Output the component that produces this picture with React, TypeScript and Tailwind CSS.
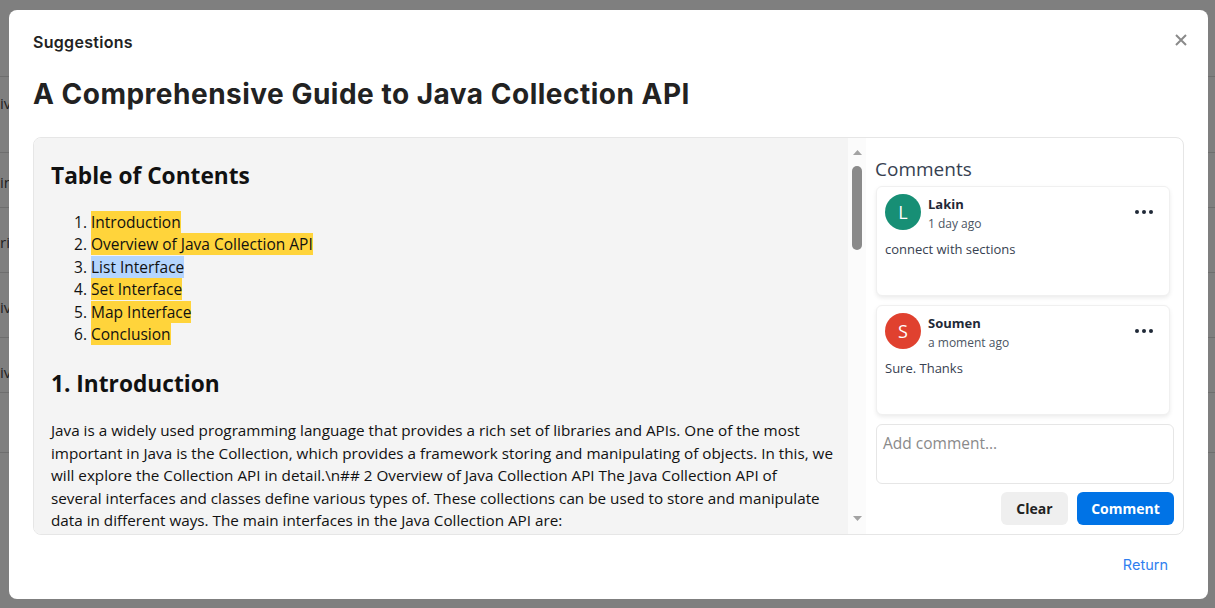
import React from "react";

const bgRows = [
  { h: "h-[77px]", pt: "pt-[0px]", t: "" },
  { h: "h-[76px]", pt: "pt-[16px]", t: "iv" },
  { h: "h-[55px]", pt: "pt-[19px]", t: "in" },
  { h: "h-[65px]", pt: "pt-[24px]", t: "rit" },
  { h: "h-[65px]", pt: "pt-[24px]", t: "iv" },
  { h: "h-[55px]", pt: "pt-[24px]", t: "iv" },
  { h: "h-[60px]", pt: "pt-[0px]", t: "" },
];

function Dots() {
  return (
    <svg width="18" height="4" viewBox="0 0 18 4" className="fill-[#1f2937]">
      <circle cx="2" cy="2" r="2" />
      <circle cx="9" cy="2" r="2" />
      <circle cx="16" cy="2" r="2" />
    </svg>
  );
}

function Comment({
  letter,
  color,
  name,
  time,
  text,
}: {
  letter: string;
  color: string;
  name: string;
  time: string;
  text: string;
}) {
  return (
    <div className="h-[110px] rounded-md border border-[#f0f0f0] bg-white px-[8px] pt-[7px] shadow-[0_2px_4px_rgba(0,0,0,0.08)]">
      <div className="flex items-start">
        <div
          className={`flex h-9 w-9 shrink-0 items-center justify-center rounded-full text-[18px] text-white ${color}`}
        >
          {letter}
        </div>
        <div className="ml-[7px] flex flex-1 flex-col pt-px">
          <span className="text-[13px] font-bold leading-[18px] text-[#1f2937]">{name}</span>
          <span className="pt-px text-[12px] leading-[20px] text-[#4b5563]">{time}</span>
        </div>
        <div className="mr-[8px] pt-[16px]">
          <Dots />
        </div>
      </div>
      <div className="mt-[6px] text-[13px] leading-[18px] text-[#374151]">{text}</div>
    </div>
  );
}

export default function App() {
  const hl = "bg-[#ffd43b]";
  return (
    <div
      className="relative h-[608px] w-[1215px] overflow-hidden bg-white"
      style={{ fontFamily: "'Open Sans', 'Noto Sans', sans-serif" }}
    >
      {/* background page */}
      <div className="flex flex-col">
        {bgRows.map((r, i) => (
          <div key={i} className={`${r.h} ${r.pt} border-b border-[#dcdcdc] text-[15px] leading-5 text-[#444]`}>
            <span>{r.t}</span>
          </div>
        ))}
      </div>

      {/* overlay */}
      <div className="absolute inset-0 bg-black/50" />

      {/* modal */}
      <div className="absolute left-[9px] top-[10px] h-[589px] w-[1199px] rounded-lg bg-white px-6 pt-[21px]">
        <div className="flex h-[22px] items-center justify-between">
          <span
            className="text-[16px] font-semibold tracking-[0.3px] text-[#222]"
            style={{ fontFamily: "Inter, 'Noto Sans', sans-serif" }}
          >
            Suggestions
          </span>
          <svg width="12" height="12" viewBox="0 0 12 12" className="mb-[4px] mr-[-3px] stroke-[#8a8a8a]" strokeWidth="2">
            <path d="M1 1 L11 11 M11 1 L1 11" />
          </svg>
        </div>
        <h1
          className="mt-[23px] text-[28px] font-bold leading-9 tracking-[0.5px] text-[#222]"
          style={{ fontFamily: "Inter, 'Noto Sans', sans-serif" }}
        >
          A Comprehensive Guide to Java Collection API
        </h1>

        <div className="mt-[25px] flex h-[398px] overflow-hidden rounded-lg border border-[#e6e6e6]">
          {/* document */}
          <div className="w-[814px] overflow-hidden bg-[#f4f4f4] pl-[17px] pr-[10px] pt-[22px] text-[#111]">
            <h2 className="text-[22.7px] font-bold leading-8">Table of Contents</h2>
            <ol className="mt-[19px] list-decimal pl-[40px] text-[15.5px] leading-[22.4px]">
              <li><span className={hl}>Introduction</span></li>
              <li><span className={hl}>Overview of Java Collection API</span></li>
              <li><span className="bg-[#b4d5fe]">List Interface</span></li>
              <li><span className={hl}>Set Interface</span></li>
              <li><span className={hl}>Map Interface</span></li>
              <li><span className={hl}>Conclusion</span></li>
            </ol>
            <h2 className="mt-[23px] text-[22.7px] font-bold leading-8">1. Introduction</h2>
            <p className="mt-[19px] whitespace-nowrap text-[15.25px] leading-[22.4px]">
              Java is a widely used programming language that provides a rich set of libraries and APIs. One of the most
              <br />
              important in Java is the Collection, which provides a framework storing and manipulating of objects. In this, we
              <br />
              will explore the Collection API in detail.\n## 2 Overview of Java Collection API The Java Collection API of
              <br />
              several interfaces and classes define various types of. These collections can be used to store and manipulate
              <br />
              data in different ways. The main interfaces in the Java Collection API are:
            </p>
          </div>

          {/* scrollbar */}
          <div className="flex w-[18px] flex-col items-center bg-[#fbfbfb] pt-[12px]">
            <svg width="9" height="5" viewBox="0 0 9 5" className="fill-[#a3a3a3]">
              <path d="M0 5 L4.5 0 L9 5 Z" />
            </svg>
            <div className="mt-[11px] h-[84px] w-[10px] rounded-full bg-[#8a8a8a]" />
            <div className="flex-1" />
            <svg width="9" height="5" viewBox="0 0 9 5" className="mb-[13px] fill-[#a3a3a3]">
              <path d="M0 0 L4.5 5 L9 0 Z" />
            </svg>
          </div>

          {/* comments */}
          <div className="flex flex-1 flex-col pl-[9px] pr-[9px] pt-[17px]">
            <div className="text-[19px] leading-7 text-[#374151]">Comments</div>
            <div className="ml-px mr-[4px] mt-[3px] flex flex-col gap-[9px]">
              <Comment letter="L" color="bg-[#178f75]" name="Lakin" time="1 day ago" text="connect with sections" />
              <Comment letter="S" color="bg-[#e0412f]" name="Soumen" time="a moment ago" text="Sure. Thanks" />
            </div>
            <div className="ml-px mt-[9px] h-[60px] rounded-md border border-[#e6e6e6] px-[6px] pt-[7px] text-[15.5px] leading-[22px] text-[#8a8a8a]">
              Add comment...
            </div>
            <div className="mt-[8px] flex justify-end gap-[9px]">
              <button className="h-[33px] w-[67px] rounded-md bg-[#efefef] text-[14px] font-bold text-[#222]">Clear</button>
              <button className="h-[33px] w-[97px] rounded-md bg-[#0073e6] text-[14px] font-bold text-white">Comment</button>
            </div>
          </div>
        </div>

        <div className="mt-[20px] flex justify-end pr-[16px]">
          <span className="text-[14.5px] leading-5 text-[#2f7fef]" style={{ fontFamily: "Inter, 'Noto Sans', sans-serif" }}>
            Return
          </span>
        </div>
      </div>
    </div>
  );
}
